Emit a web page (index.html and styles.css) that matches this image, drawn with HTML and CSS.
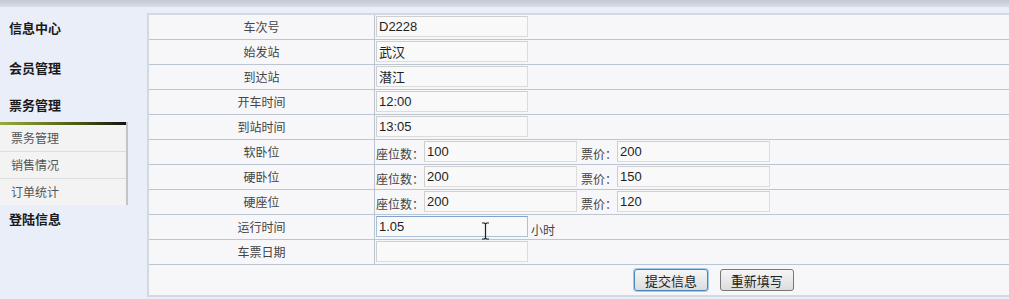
FILE: index.html
```html
<!DOCTYPE html>
<html lang="zh-CN">
<head>
    <meta charset="UTF-8">
    <title>票务管理</title>
    <link rel="stylesheet" href="styles.css">
</head>
<body>

<div class="topbar"></div>

<div class="page">
    <div class="sidebar">
        <div class="menu-title first">信息中心</div>
        <div class="menu-title second">会员管理</div>
        <div class="menu-title third">票务管理</div>
        <div class="submenu">
            <div class="sub-item">票务管理</div>
            <div class="sub-item">销售情况</div>
            <div class="sub-item">订单统计</div>
        </div>
        <div class="menu-title last">登陆信息</div>
    </div>

    <div class="main">
        <form>
        <table class="ticket-table">
            <tr>
                <td class="label">车次号</td>
                <td class="field"><div class="cell"><input type="text" value="D2228"></div></td>
            </tr>
            <tr>
                <td class="label">始发站</td>
                <td class="field"><div class="cell"><input type="text" value="武汉"></div></td>
            </tr>
            <tr>
                <td class="label">到达站</td>
                <td class="field"><div class="cell"><input type="text" value="潜江"></div></td>
            </tr>
            <tr>
                <td class="label">开车时间</td>
                <td class="field"><div class="cell"><input type="text" value="12:00"></div></td>
            </tr>
            <tr>
                <td class="label">到站时间</td>
                <td class="field"><div class="cell"><input type="text" value="13:05"></div></td>
            </tr>
            <tr>
                <td class="label">软卧位</td>
                <td class="field"><div class="cell">
                    <span class="unit">座位数：</span><input type="text" class="seat" value="100">
                    <span class="unit price">票价：</span><input type="text" class="seat" value="200">
                </div></td>
            </tr>
            <tr>
                <td class="label">硬卧位</td>
                <td class="field"><div class="cell">
                    <span class="unit">座位数：</span><input type="text" class="seat" value="200">
                    <span class="unit price">票价：</span><input type="text" class="seat" value="150">
                </div></td>
            </tr>
            <tr>
                <td class="label">硬座位</td>
                <td class="field"><div class="cell">
                    <span class="unit">座位数：</span><input type="text" class="seat" value="200">
                    <span class="unit price">票价：</span><input type="text" class="seat" value="120">
                </div></td>
            </tr>
            <tr>
                <td class="label">运行时间</td>
                <td class="field"><div class="cell">
                    <input type="text" class="active" value="1.05"><span class="unit hours">小时</span>
                </div></td>
            </tr>
            <tr>
                <td class="label">车票日期</td>
                <td class="field"><div class="cell"><input type="text" value=""></div></td>
            </tr>
            <tr>
                <td colspan="2" class="buttons">
                    <button type="button" class="btn focus">提交信息</button>
                    <button type="reset" class="btn">重新填写</button>
                </td>
            </tr>
        </table>
        </form>
        <!-- mouse pointer -->
        <svg class="cursor" width="9" height="18" viewBox="0 0 9 18">
            <path d="M1 1h2.5l1 1 1-1H8M4.5 2v14M1 17h2.5l1-1 1 1H8" fill="none" stroke="#222" stroke-width="1.2"/>
        </svg>
    </div>
</div>

</body>
</html>
```

FILE: styles.css
```css
body {
    margin: 0;
    padding: 0;
    background-color: #e9eef8;
    font-family: "Noto Sans CJK SC", "Liberation Sans", sans-serif;
    font-size: 12px;
    overflow: hidden;
}
.topbar {
    height: 7px;
    background: linear-gradient(#c3c8d3, #d9dee9);
}
.page {
    display: flex;
}
.sidebar {
    width: 147px;
    flex-shrink: 0;
}
.menu-title {
    padding-left: 9px;
    font-size: 13px;
    font-weight: bold;
    color: #1a1a1a;
}
.menu-title.first {
    height: 41px;
    line-height: 41px;
}
.menu-title.second {
    height: 40px;
    line-height: 40px;
}
.menu-title.third {
    height: 34px;
    line-height: 34px;
}
.menu-title.last {
    height: 30px;
    line-height: 28px;
}
.submenu {
    width: 126px;
    background-color: #f3f3f3;
    border-top: 3px solid #222;
    border-image: linear-gradient(to right, #9aac3c, #4d5a12 60%, #111) 1;
    border-bottom: 0;
    border-left: 0;
    border-right: 0;
    box-shadow: 2px 0 0 #c4c4c4;
}
.sub-item {
    height: 26px;
    line-height: 26px;
    padding-left: 11px;
    color: #555;
    border-bottom: 1px solid #dedede;
}
.sub-item:last-child {
    border-bottom: 0;
}
.main {
    position: relative;
    padding-top: 6px;
}
.ticket-table {
    width: 870px;
    border-collapse: collapse;
    background-color: #f7f7f9;
    border: 2px solid #d3d9e1;
}
.ticket-table tr {
    height: 25px;
}
.ticket-table td {
    border: 1px solid #bcc6d2;
    padding: 0;
}
.ticket-table td.label {
    width: 225px;
    text-align: center;
    color: #444;
    vertical-align: middle;
    line-height: 16px;
}
.ticket-table td.field {
    color: #444;
    vertical-align: top;
    padding: 1px 0 0 1px;
}
.cell {
    display: flex;
    align-items: flex-start;
    height: 23px;
}
.unit {
    margin-top: 5px;
    line-height: 16px;
    white-space: nowrap;
}
.unit.price {
    margin-left: 4px;
}
.unit.hours {
    margin-left: 3px;
    margin-top: 6px;
}
.ticket-table td.buttons {
    height: 30px;
    padding: 0 0 0 485px;
    vertical-align: middle;
}
input {
    width: 148px;
    height: 19px;
    padding: 0 0 0 2px;
    margin: 0;
    border: 1px solid #dcdcdc;
    border-top-color: #cfcfcf;
    border-left-color: #cfcfcf;
    background-color: #f9f9f9;
    font-family: "Liberation Sans", "Noto Sans CJK SC", sans-serif;
    font-size: 13px;
    color: #1e1e1e;
}
input.seat {
    width: 149px;
}
input.active {
    border-color: #a9c2dc;
    border-top-color: #7fa4cc;
}
.btn {
    width: 74px;
    height: 22px;
    margin-right: 9px;
    padding: 0;
    font-family: "Noto Sans CJK SC", sans-serif;
    font-size: 13px;
    color: #222;
    background: linear-gradient(#f6f6f6, #dcdcdc);
    border: 1px solid #777;
    border-radius: 3px;
}
.btn.focus {
    border-color: #4c86b8;
    box-shadow: 0 0 0 1px #9fcbec;
}
.cursor {
    position: absolute;
    left: 334px;
    top: 215px;
}
```
